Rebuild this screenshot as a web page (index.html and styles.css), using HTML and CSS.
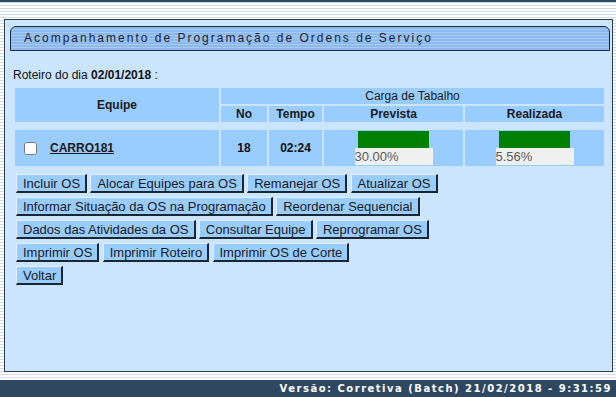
FILE: index.html
```html
<!DOCTYPE html>
<html lang="pt-BR">
<head>
    <meta charset="UTF-8">
    <title>Acompanhamento de Programação de Ordens de Serviço</title>
    <link rel="stylesheet" href="styles.css">
</head>
<body>
    <div class="topLine"></div>
    <div class="panel">
        <div class="titleBar">Acompanhamento de Programação de Ordens de Serviço</div>
        <div class="content">
            <p class="roteiro">Roteiro do dia <b>02/01/2018</b> :</p>
            <table class="grid">
                <colgroup>
                    <col class="cEquipe">
                    <col class="cNo">
                    <col class="cTempo">
                    <col class="cPrev">
                    <col class="cReal">
                </colgroup>
                <tr class="head">
                    <th rowspan="2">Equipe</th>
                    <td colspan="4" class="carga">Carga de Tabalho</td>
                </tr>
                <tr class="head">
                    <th>No</th>
                    <th>Tempo</th>
                    <th>Prevista</th>
                    <th>Realizada</th>
                </tr>
                <tr class="spacer"><td colspan="5"></td></tr>
                <tr class="data">
                    <td class="equipe">
                        <input type="checkbox" class="check">
                        <a href="#">CARRO181</a>
                    </td>
                    <td class="num">18</td>
                    <td class="num">02:24</td>
                    <td class="bar">
                        <div class="fill"></div>
                        <input type="text" class="pct" value="30.00%" readonly>
                    </td>
                    <td class="bar">
                        <div class="fill"></div>
                        <input type="text" class="pct" value="5.56%" readonly>
                    </td>
                </tr>
            </table>
            <div class="buttons">
                <button>Incluir OS</button>
                <button>Alocar Equipes para OS</button>
                <button>Remanejar OS</button>
                <button>Atualizar OS</button>
                <br>
                <button>Informar Situação da OS na Programação</button>
                <button>Reordenar Sequencial</button>
                <br>
                <button>Dados das Atividades da OS</button>
                <button>Consultar Equipe</button>
                <button>Reprogramar OS</button>
                <br>
                <button>Imprimir OS</button>
                <button>Imprimir Roteiro</button>
                <button>Imprimir OS de Corte</button>
                <br>
                <button>Voltar</button>
            </div>
        </div>
    </div>
    <div class="footer">Versão: Corretiva (Batch) 21/02/2018 - 9:31:59</div>
</body>
</html>
```

FILE: styles.css
```css
html, body {
    height: 100%;
}

body {
    margin: 0;
    display: flex;
    flex-direction: column;
    font-family: "Liberation Sans", Arial, sans-serif;
    font-size: 12px;
    color: #111;
    background: repeating-linear-gradient(to bottom, #ffffff 0px, #ffffff 2px, #cfdbe7 2px, #cfdbe7 3px);
}

.topLine {
    height: 2px;
    background-color: #2f4862;
}

.panel {
    box-sizing: border-box;
    height: 353px;
    margin: 17px 3px 0 4px;
    border: 1px solid #2b3e54;
    background-color: #cce5ff;
}

.titleBar {
    box-sizing: border-box;
    height: 25px;
    margin: 6px 2px 0 5px;
    padding-left: 13px;
    border: 1px solid #1d2c3c;
    border-radius: 6px 6px 0 0;
    background: repeating-linear-gradient(to bottom, #8db9ee 0px, #8db9ee 2px, #a5caf3 2px, #a5caf3 3px);
    font-size: 12px;
    letter-spacing: 2px;
    line-height: 22px;
    color: #1b2430;
}

.content {
    padding: 0 0 0 8px;
}

.roteiro {
    margin: 17px 0 4px 0;
}

.grid {
    table-layout: fixed;
    width: 593px;
    margin-left: 0;
    border-spacing: 2px;
}

.cEquipe { width: 204px; }
.cNo { width: 46px; }
.cTempo { width: 53px; }
.cPrev { width: 139px; }
.cReal { width: 139px; }

.head th,
.head td {
    height: 16px;
    padding: 0;
    background-color: #99ccff;
    text-align: center;
    font-size: 12px;
    color: #1a1a1a;
}

.carga {
    font-weight: normal;
}

.spacer td {
    height: 4px;
    padding: 0;
}

.data td {
    height: 36px;
    padding: 0;
    background-color: #99ccff;
    font-weight: bold;
}

.equipe {
    display: flex;
    align-items: center;
    height: 36px;
}

.check {
    width: 13px;
    height: 13px;
    margin: 0 13px 0 9px;
}

.equipe a {
    color: #1a1a1a;
    font-weight: bold;
}

.num {
    text-align: center;
}

.bar {
    vertical-align: top;
}

.fill {
    width: 71px;
    height: 17px;
    margin: 1px auto 0 auto;
    background-color: #008000;
}

.pct {
    display: block;
    box-sizing: border-box;
    width: 78px;
    height: 17px;
    margin: 0 auto;
    padding: 0;
    border: none;
    background-color: #f0f0f0;
    font-family: "Liberation Sans", Arial, sans-serif;
    font-size: 13px;
    color: #5a5a5a;
}

.buttons {
    margin-top: 4px;
    padding-left: 3px;
    line-height: 23px;
}

button {
    height: 19px;
    margin: 0;
    padding: 0 5px 0 6px;
    border-style: solid;
    border-width: 1px 2px 2px 1px;
    border-color: #e4f0fc #1a2633 #1a2633 #e4f0fc;
    background-color: #99ccff;
    font-family: "Liberation Sans", Arial, sans-serif;
    font-size: 13px;
    color: #1a1a1a;
    vertical-align: middle;
}

.footer {
    margin-top: auto;
    height: 17px;
    padding-right: 4px;
    background-color: #2f4862;
    color: #ffffff;
    text-align: right;
    font-family: "DejaVu Sans", Verdana, sans-serif;
    font-size: 10px;
    font-weight: bold;
    letter-spacing: 1.5px;
    line-height: 17px;
}
```
